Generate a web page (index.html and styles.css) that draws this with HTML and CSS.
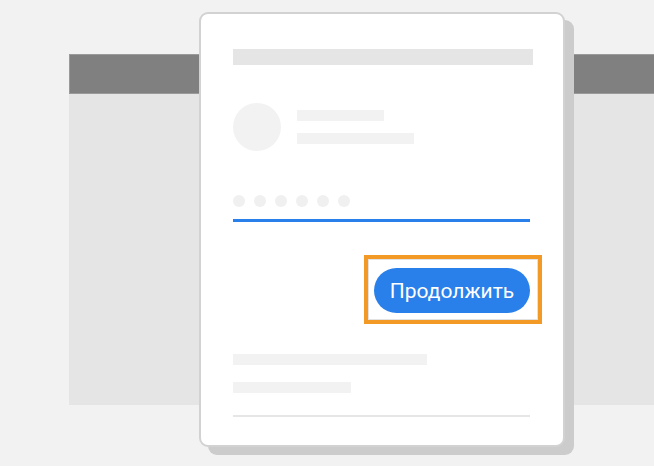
FILE: index.html
```html
<!DOCTYPE html>
<html lang="ru">
<head>
    <meta charset="UTF-8">
    <title>Продолжить</title>
    <link rel="stylesheet" href="styles.css">
</head>
<body>
    <div class="scene">
        <div class="window">
            <div class="window-bar"></div>
            <div class="window-body"></div>
        </div>

        <div class="card">
            <div class="bar bar-title"></div>

            <div class="profile">
                <div class="avatar"></div>
                <div class="profile-lines">
                    <div class="bar bar-name"></div>
                    <div class="bar bar-mail"></div>
                </div>
            </div>

            <div class="dots">
                <span class="dot"></span>
                <span class="dot"></span>
                <span class="dot"></span>
                <span class="dot"></span>
                <span class="dot"></span>
                <span class="dot"></span>
            </div>
            <div class="underline"></div>

            <div class="highlight">
                <button class="btn" type="button">Продолжить</button>
            </div>

            <div class="bar bar-long"></div>
            <div class="bar bar-short"></div>
            <div class="divider"></div>
        </div>
    </div>
</body>
</html>
```

FILE: styles.css
```css
html, body {
    margin: 0;
    padding: 0;
}

body {
    width: 654px;
    height: 466px;
    background: #f2f2f2;
    font-family: Roboto, "Noto Sans", Arial, sans-serif;
    overflow: hidden;
}

.scene {
    display: grid;
}

.window,
.card {
    grid-area: 1 / 1;
}

/* fake browser window behind the dialog */
.window {
    margin: 54px 0 0 69px;
    width: 585px;
    display: flex;
    flex-direction: column;
}

.window-bar {
    height: 40px;
    background: #808080;
    box-sizing: border-box;
    border: 1px solid #9a9a9a;
    border-right: none;
}

.window-body {
    height: 311px;
    background: #e5e5e5;
}

/* dialog card */
.card {
    margin: 12px 0 0 199px;
    width: 366px;
    height: 435px;
    box-sizing: border-box;
    border: 2px solid #d2d2d2;
    border-radius: 9px;
    background: #fff;
    box-shadow: 9px 8px 0 #cccccc;
    padding: 35px 0 0 32px;
    display: flex;
    flex-direction: column;
    align-items: flex-start;
}

.bar {
    background: #f2f2f2;
    height: 11px;
}

.bar-title {
    width: 300px;
    height: 16px;
    background: #e5e5e5;
}

.profile {
    margin-top: 38px;
    display: flex;
    gap: 16px;
}

.avatar {
    width: 48px;
    height: 48px;
    border-radius: 50%;
    background: #f2f2f2;
}

.profile-lines {
    padding-top: 7px;
    display: flex;
    flex-direction: column;
    gap: 12px;
}

.bar-name {
    width: 87px;
}

.bar-mail {
    width: 117px;
}

.dots {
    margin-top: 44px;
    display: flex;
    gap: 9px;
}

.dot {
    width: 12px;
    height: 12px;
    border-radius: 50%;
    background: #f0f0f0;
}

.underline {
    margin-top: 12px;
    width: 297px;
    height: 3px;
    background: #2a80ea;
}

.highlight {
    margin: 33px 0 0 131px;
    width: 178px;
    height: 69px;
    box-sizing: border-box;
    border: 4px solid #f39a26;
    box-shadow: inset 0 0 0 1px #e2e2e2;
    padding: 9px 0 0 6px;
}

.btn {
    width: 156px;
    height: 45px;
    border: none;
    border-radius: 23px;
    background: #2a80ea;
    color: #fff;
    font-family: Roboto, "Noto Sans", Arial, sans-serif;
    font-size: 21px;
    padding: 0;
    cursor: pointer;
}

.bar-long {
    margin-top: 30px;
    width: 194px;
}

.bar-short {
    margin-top: 17px;
    width: 118px;
}

.divider {
    margin-top: 22px;
    width: 297px;
    height: 2px;
    background: #e6e6e6;
}
```
